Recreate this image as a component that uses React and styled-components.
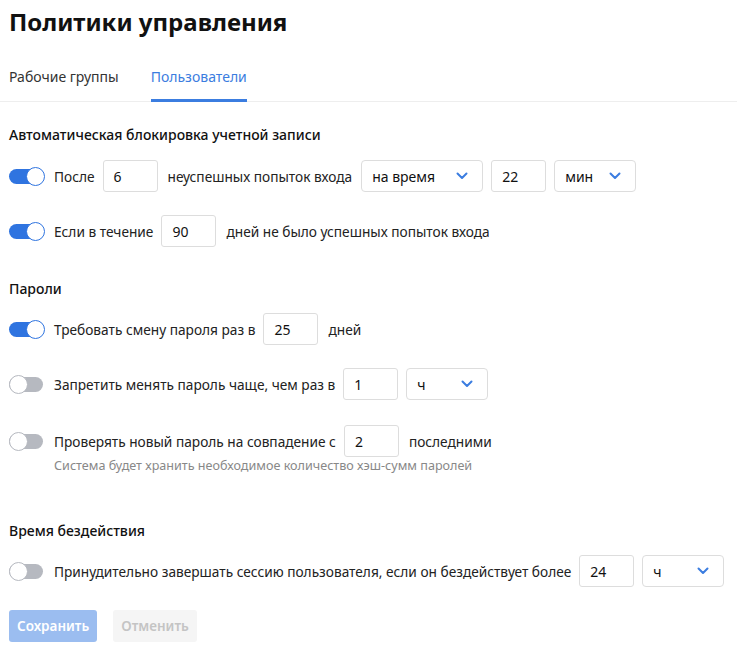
import React from "react";
import styled, { createGlobalStyle } from "styled-components";

const GlobalStyle = createGlobalStyle`
  body {
    margin: 0;
    background: #ffffff;
    font-family: "Noto Sans", "Open Sans", sans-serif;
    color: #222222;
  }
  * { box-sizing: border-box; }
`;

const Page = styled.div`
  padding: 6px 0 0;
`;

const Title = styled.h1`
  margin: 0 9px;
  font-size: 24px;
  line-height: 32px;
  font-weight: 700;
  color: #111111;
`;

const Tabs = styled.div`
  display: flex;
  gap: 32px;
  margin-top: 29px;
  padding: 0 9px;
  border-bottom: 1px solid #eeeeee;
`;

const Tab = styled.div`
  font-size: 14px;
  line-height: 20px;
  padding-bottom: 12px;
  margin-bottom: -1px;
  color: ${(p) => (p.active ? "#3b7de0" : "#333333")};
  border-bottom: 3px solid ${(p) => (p.active ? "#3b7de0" : "transparent")};
`;

const Content = styled.div`
  padding: 0 9px;
`;

const Section = styled.div`
  margin-top: ${(p) => p.top}px;
`;

const SectionTitle = styled.div`
  font-size: 14px;
  line-height: 20px;
  font-weight: 500;
  color: #111111;
  margin-bottom: ${(p) => p.mb ?? 15}px;
`;

const Row = styled.div`
  display: flex;
  align-items: center;
  min-height: 32px;
  margin-bottom: ${(p) => p.gap ?? 23}px;
  font-size: 13.7px;
  color: #222222;
`;

const Label = styled.span`
  margin: 0 8px 0 9px;
  white-space: nowrap;
`;

const Text = styled.span`
  margin: 0 9px 0 10px;
  white-space: nowrap;
`;

const Track = styled.span`
  position: relative;
  display: inline-block;
  width: 34px;
  height: 15px;
  margin-right: 2px;
  border-radius: 8px;
  background: ${(p) => (p.on ? "#2f74e0" : "#b6b9c0")};
  flex: none;
`;

const Knob = styled.span`
  position: absolute;
  top: -2px;
  ${(p) => (p.on ? "right: -2px;" : "left: 0;")}
  width: 19px;
  height: 19px;
  border-radius: 50%;
  background: #ffffff;
  border: 1.5px solid ${(p) => (p.on ? "#2f74e0" : "#b6b9c0")};
`;

const Toggle = ({ on }) => (
  <Track on={on}>
    <Knob on={on} />
  </Track>
);

const NumInput = styled.div`
  width: 55px;
  height: 32px;
  border: 1px solid #dddddd;
  border-radius: 3px;
  padding: 0 10px;
  display: flex;
  align-items: center;
  font-size: 14px;
  color: #111111;
  flex: none;
`;

const SelectBox = styled.div`
  width: ${(p) => p.w}px;
  height: 32px;
  border: 1px solid #dddddd;
  border-radius: 4px;
  padding: 0 14px 0 10px;
  display: flex;
  align-items: center;
  justify-content: space-between;
  font-size: 14px;
  color: #111111;
  margin-left: ${(p) => p.ml ?? 0}px;
  margin-right: ${(p) => p.mr ?? 0}px;
  flex: none;
`;

const Chevron = () => (
  <svg width="12" height="8" viewBox="0 0 12 8" fill="none">
    <path d="M1.5 1.5L6 6l4.5-4.5" stroke="#3b7de0" strokeWidth="2" strokeLinecap="round" strokeLinejoin="round" />
  </svg>
);

const Select = ({ value, w, ml, mr }) => (
  <SelectBox w={w} ml={ml} mr={mr}>
    <span>{value}</span>
    <Chevron />
  </SelectBox>
);

const Hint = styled.div`
  margin: 0 0 0 45px;
  font-size: 12.6px;
  line-height: 18px;
  color: #888888;
`;

const Buttons = styled.div`
  display: flex;
  gap: 16px;
  margin-top: 12px;
`;

const Button = styled.button`
  height: 32px;
  padding: 0 8px;
  border: none;
  border-radius: 3px;
  font-family: inherit;
  font-size: 13.5px;
  font-weight: 600;
  background: ${(p) => (p.primary ? "#9bbdf0" : "#f5f5f5")};
  color: ${(p) => (p.primary ? "#ffffff" : "#c4c4c4")};
`;

export default function App() {
  return (
    <Page>
      <GlobalStyle />
      <Title>Политики управления</Title>
      <Tabs>
        <Tab>Рабочие группы</Tab>
        <Tab active>Пользователи</Tab>
      </Tabs>
      <Content>
        <Section top={23}>
          <SectionTitle>Автоматическая блокировка учетной записи</SectionTitle>
          <Row>
            <Toggle on />
            <Label>После</Label>
            <NumInput>6</NumInput>
            <Text>неуспешных попыток входа</Text>
            <Select value="на время" w={122} mr={8} />
            <NumInput>22</NumInput>
            <Select value="мин" w={82} ml={8} />
          </Row>
          <Row>
            <Toggle on />
            <Label>Если в течение</Label>
            <NumInput>90</NumInput>
            <Text>дней не было успешных попыток входа</Text>
          </Row>
        </Section>
        <Section top={32}>
          <SectionTitle mb={14}>Пароли</SectionTitle>
          <Row>
            <Toggle on />
            <Label>Требовать смену пароля раз в</Label>
            <NumInput>25</NumInput>
            <Text>дней</Text>
          </Row>
          <Row gap={25}>
            <Toggle />
            <Label>Запретить менять пароль чаще, чем раз в</Label>
            <NumInput>1</NumInput>
            <Select value="ч" w={82} ml={8} />
          </Row>
          <Row gap={0}>
            <Toggle />
            <Label>Проверять новый пароль на совпадение с</Label>
            <NumInput>2</NumInput>
            <Text>последними</Text>
          </Row>
          <Hint>Система будет хранить необходимое количество хэш-сумм паролей</Hint>
        </Section>
        <Section top={46}>
          <SectionTitle mb={14}>Время бездействия</SectionTitle>
          <Row>
            <Toggle />
            <Label>Принудительно завершать сессию пользователя, если он бездействует более</Label>
            <NumInput>24</NumInput>
            <Select value="ч" w={82} ml={8} />
          </Row>
        </Section>
        <Buttons>
          <Button primary>Сохранить</Button>
          <Button>Отменить</Button>
        </Buttons>
      </Content>
    </Page>
  );
}
